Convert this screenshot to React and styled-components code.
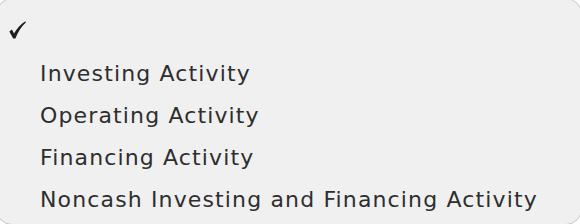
import React from "react";
import styled, { createGlobalStyle } from "styled-components";

const Global = createGlobalStyle`
  html, body { margin: 0; padding: 0; background: #ffffff; overflow: hidden; }
  body { width: 580px; height: 224px; }
`;

const Menu = styled.ul`
  list-style: none;
  box-sizing: border-box;
  margin: -2px 0 0 -4px;
  padding: 12px 0 0 0;
  width: 586px;
  height: 227px;
  background: #f0f0f0;
  border: 1px solid #c4c7cc;
  border-radius: 16px;
  font-family: "DejaVu Sans", Verdana, sans-serif;
  font-size: 22px;
  letter-spacing: 1.14px;
  color: #2e2e2e;
`;

const Item = styled.li`
  display: flex;
  align-items: center;
  height: 42px;
  line-height: 42px;
  white-space: nowrap;
`;

const CheckCell = styled.span`
  display: flex;
  align-items: center;
  justify-content: flex-start;
  width: 43px;
  height: 42px;
  padding-left: 12px;
  box-sizing: border-box;
  flex: none;
`;

const Label = styled.span`
  flex: 1;
`;

const Check = () => (
  <svg width="17" height="18" viewBox="0 0 17 18" style={{ marginTop: "-4px" }}>
    <path
      d="M0.3 10.4 L3 8.6 L5 12.6 C7.8 7.6 11.4 3.2 16.4 0.2 L16.8 1.4 C12.4 5.2 9 10.6 6.4 17.6 L4.2 17.6 Z"
      fill="#1e1e1e"
    />
  </svg>
);

const items = [
  { label: "", checked: true },
  { label: "Investing Activity" },
  { label: "Operating Activity" },
  { label: "Financing Activity" },
  { label: "Noncash Investing and Financing Activity" },
];

export default function App() {
  return (
    <>
      <Global />
      <Menu>
        {items.map((it, i) => (
          <Item key={i}>
            <CheckCell>{it.checked ? <Check /> : null}</CheckCell>
            <Label>{it.label}</Label>
          </Item>
        ))}
      </Menu>
    </>
  );
}
